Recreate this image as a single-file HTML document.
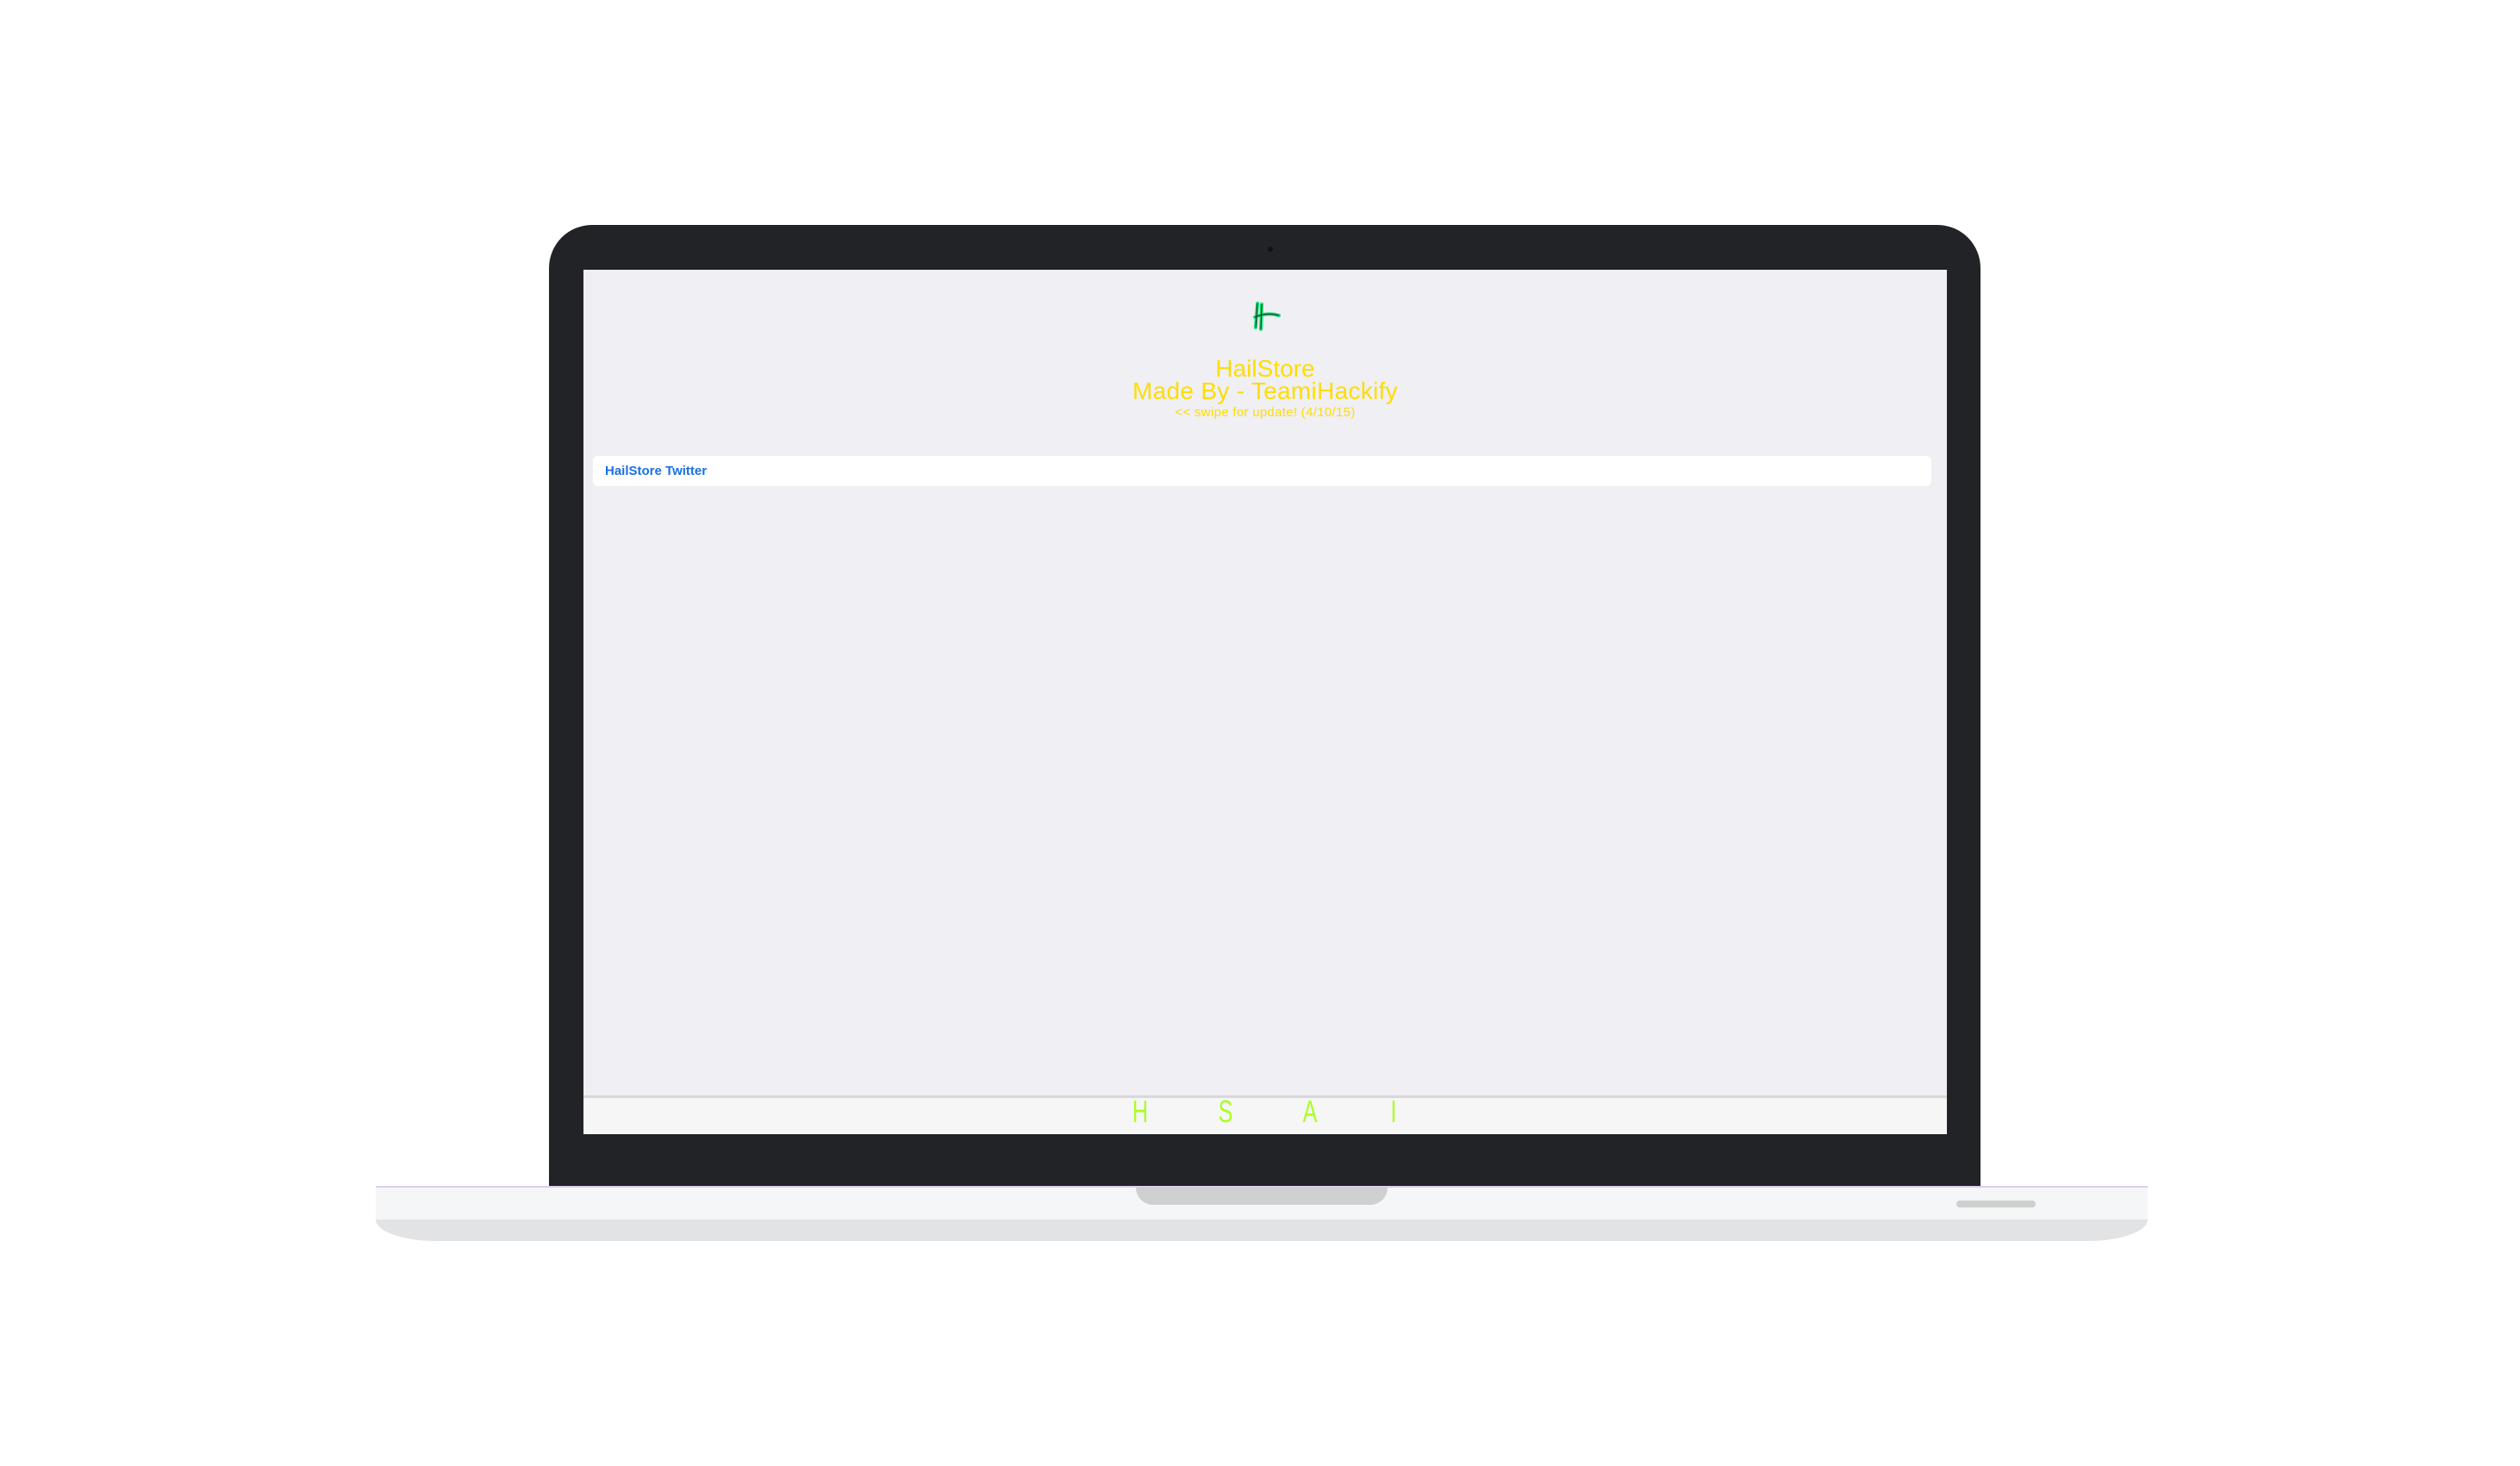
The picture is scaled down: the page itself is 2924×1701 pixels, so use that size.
<!DOCTYPE html>
<html><head><style>
*{margin:0;padding:0;box-sizing:border-box}
body{width:2924px;height:1701px;background:#fff;position:relative;overflow:hidden;font-family:"Liberation Sans",sans-serif}
.abs{position:absolute}
</style></head><body>
<div class="abs" style="left:637px;top:261px;width:1661px;height:1117px;background:#222327;border-radius:50px 50px 0 0"></div>
<div class="abs" style="left:1471px;top:286px;width:6px;height:6px;border-radius:50%;background:#111"></div>
<div class="abs" style="left:677px;top:313px;width:1582px;height:1003px;background:#efeff4"></div>
<div class="abs" style="left:1452px;top:348px;width:40px;height:40px">
<svg width="40" height="40" viewBox="0 0 40 40"><path d="M7 4 L5 32 M12 5 L11 34 M4 20 Q18 14 32 18" stroke="#10e070" stroke-width="4" fill="none" stroke-linecap="round"/><path d="M7 4 L5 32 M12 5 L11 34 M4 20 Q18 14 32 18" stroke="#222" stroke-width="1" fill="none"/></svg>
</div>
<div class="abs" style="left:677px;width:1582px;top:414px;text-align:center;color:#ffdd00;font-size:28px;line-height:28px">HailStore</div>
<div class="abs" style="left:677px;width:1582px;top:440px;text-align:center;color:#ffdd00;font-size:28px;line-height:28px;letter-spacing:0.3px">Made By - TeamiHackify</div>
<div class="abs" style="left:677px;width:1582px;top:471px;text-align:center;color:#ffdd00;font-size:15px;line-height:16px;letter-spacing:0.3px">&lt;&lt; swipe for update! (4/10/15)</div>
<div class="abs" style="left:688px;top:529px;width:1553px;height:35px;background:#fff;border-radius:6px"></div>
<div class="abs" style="left:702px;top:538px;color:#1a6fe8;font-size:15px;font-weight:bold">HailStore Twitter</div>
<div class="abs" style="left:677px;top:1271px;width:1582px;height:45px;background:#f6f6f6;border-top:3px solid #d8d8da"></div>
<div class="abs" style="left:1300px;top:1270px;width:360px;height:40px;color:#aaff22;font-size:36px;line-height:40px">
<span class="abs" style="left:10px;transform:scaleX(.7)">H</span>
<span class="abs" style="left:110px;transform:scaleX(.7)">S</span>
<span class="abs" style="left:208px;transform:scaleX(.7)">A</span>
<span class="abs" style="left:312px;transform:scaleX(.7)">I</span>
</div>
<div class="abs" style="left:436px;top:1376px;width:2056px;height:39px;background:#f5f6f8;border-top:2px solid #dccdf0"></div>
<div class="abs" style="left:436px;top:1415px;width:2056px;height:25px;background:#e2e3e5;border-radius:0 0 70px 70px/0 0 25px 25px"></div>
<div class="abs" style="left:1318px;top:1378px;width:292px;height:20px;background:#d0d0d0;border-radius:0 0 20px 20px"></div>
<div class="abs" style="left:2270px;top:1393px;width:92px;height:8px;background:#cfcfcf;border-radius:4px"></div>
</body></html>
